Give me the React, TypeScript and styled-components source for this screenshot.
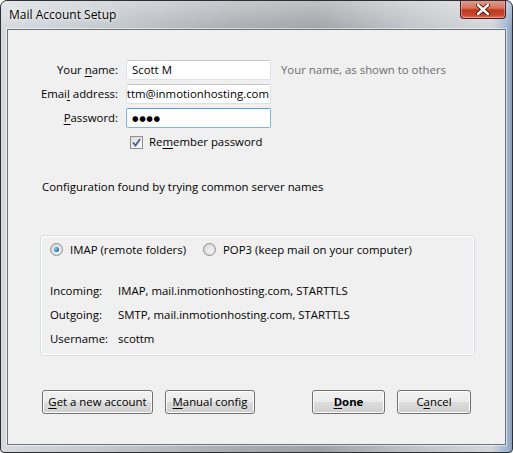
import React from "react";
import styled, { createGlobalStyle } from "styled-components";

const GlobalStyle = createGlobalStyle`
  html, body {
    margin: 0;
    padding: 0;
    background: #ffffff;
  }
  body {
    font-family: "Open Sans", "Noto Sans", "DejaVu Sans", sans-serif;
    font-size: 11.4px;
    line-height: 16px;
    color: #000000;
  }
`;

const Window = styled.div`
  box-sizing: border-box;
  width: 513px;
  height: 453px;
  border: 1px solid #2c2f33;
  border-radius: 7px 7px 4px 4px;
  padding: 0 6px 7px 6px;
  display: flex;
  flex-direction: column;
  overflow: hidden;
  background:
    linear-gradient(to bottom, rgba(255, 255, 255, 0.35), rgba(255, 255, 255, 0) 30px),
    linear-gradient(
      to right,
      #d6dadf 0%,
      #c3c8cd 20%,
      #a9adb2 45%,
      #9ea2a6 62%,
      #bfc3c7 80%,
      #d3d6da 96%,
      #9fb6d4 99%,
      #8ea0b8 100%
    );
`;

const TitleBar = styled.div`
  height: 28px;
  flex: none;
  display: flex;
  align-items: flex-start;
  justify-content: space-between;
`;

const Title = styled.div`
  padding: 6px 0 0 2px;
  font-size: 12px;
  color: #000000;
  text-shadow: 0 0 6px rgba(255, 255, 255, 0.9), 0 0 2px rgba(255, 255, 255, 0.9);
`;

const CloseButton = styled.div`
  box-sizing: border-box;
  width: 46px;
  height: 19px;
  margin-top: -1px;
  border: 1px solid #4d1a14;
  border-top: none;
  border-radius: 0 0 4px 4px;
  display: flex;
  align-items: center;
  justify-content: center;
  box-shadow: inset 0 0 0 1px rgba(255, 200, 190, 0.45);
  background: linear-gradient(
    to bottom,
    #e4a092 0%,
    #d6735f 45%,
    #c0391f 55%,
    #c9472e 85%,
    #e07a5c 100%
  );
`;

const Client = styled.div`
  flex: 1;
  display: flex;
  flex-direction: column;
  background: #f0f0f0;
  border: 1px solid #6d7178;
  box-shadow: 0 0 0 1px rgba(255, 255, 255, 0.55);
  padding-top: 30px;
`;

const Form = styled.div`
  display: grid;
  grid-template-columns: 110px 145px auto;
  grid-auto-rows: 20px;
  column-gap: 8px;
  row-gap: 4px;
  align-items: center;
`;

const Label = styled.div`
  text-align: right;
  white-space: nowrap;
`;

const Key = styled.span`
  text-decoration: underline;
  text-underline-offset: 2px;
`;

const Field = styled.div<{ $focused?: boolean; $end?: boolean }>`
  box-sizing: border-box;
  height: 20px;
  display: flex;
  align-items: center;
  justify-content: ${(p) => (p.$end ? "flex-end" : "flex-start")};
  overflow: hidden;
  white-space: nowrap;
  padding: 0 ${(p) => (p.$end ? "1px" : "5px")};
  background: #ffffff;
  border: 1px solid ${(p) => (p.$focused ? "#7eb4ea" : "#dde1e6")};
  border-top-color: ${(p) => (p.$focused ? "#569de5" : "#c5c9cf")};
  border-radius: 2px;
`;

const Dots = styled.span`
  font-size: 7.5px;
  letter-spacing: 0.6px;
`;

const Hint = styled.div`
  padding-left: 2px;
  color: #6d6d6d;
  white-space: nowrap;
`;

const CheckRow = styled.div`
  grid-column: 2 / 4;
  display: flex;
  align-items: center;
  gap: 6px;
  padding-left: 4px;
`;

const CheckBox = styled.div`
  box-sizing: border-box;
  width: 13px;
  height: 13px;
  border: 1px solid #8f8f8f;
  background: linear-gradient(135deg, #dcdcdc, #fbfbfb);
  display: flex;
  align-items: center;
  justify-content: center;
`;

const Note = styled.div`
  height: 16px;
  margin: 27px 0 0 34px;
`;

const Group = styled.div`
  box-sizing: border-box;
  width: 435px;
  height: 121px;
  margin: 40px 0 0 32px;
  border: 1px solid #d5dfe5;
  border-radius: 3px;
  box-shadow: inset 0 0 0 1px #ffffff;
  padding: 6px 9px 0 9px;
  display: flex;
  flex-direction: column;
`;

const RadioRow = styled.div`
  display: flex;
  align-items: center;
  height: 15px;
`;

const RadioOption = styled.div<{ $width: number }>`
  display: flex;
  align-items: center;
  gap: 7px;
  width: ${(p) => p.$width}px;
`;

const Radio = styled.div<{ $checked?: boolean }>`
  box-sizing: border-box;
  width: 13px;
  height: 13px;
  border-radius: 50%;
  border: 1px solid #8d8d8d;
  background: radial-gradient(circle at 60% 60%, #f4f4f4 0%, #dcdcdc 70%, #cfcfcf 100%);
  display: flex;
  align-items: center;
  justify-content: center;

  &::after {
    content: "";
    display: ${(p) => (p.$checked ? "block" : "none")};
    width: 5px;
    height: 5px;
    border-radius: 50%;
    background: radial-gradient(circle at 35% 35%, #8fd0f7 0%, #2a7fc0 55%, #124d86 100%);
  }
`;

const Details = styled.div`
  margin-top: 22px;
  display: grid;
  grid-template-columns: 68px auto;
  grid-auto-rows: 24px;
  align-items: center;
`;

const Buttons = styled.div`
  margin: 34px 0 0 34px;
  display: flex;
  align-items: center;
`;

const Button = styled.div<{ $width: number; $gap: number; $bold?: boolean }>`
  box-sizing: border-box;
  width: ${(p) => p.$width}px;
  height: 24px;
  margin-right: ${(p) => p.$gap}px;
  border: 1px solid #707070;
  border-radius: 3px;
  display: flex;
  align-items: center;
  justify-content: center;
  font-weight: ${(p) => (p.$bold ? 700 : 400)};
  box-shadow: inset 0 0 0 1px #fcfcfc;
  background: linear-gradient(
    to bottom,
    #f2f2f2 0%,
    #ebebeb 50%,
    #dddddd 50%,
    #cfcfcf 100%
  );
`;

const CloseGlyph = () => (
  <svg width="14" height="11" viewBox="0 0 14 11">
    <path
      d="M2 1 L12 10 M12 1 L2 10"
      stroke="#3b0c06"
      strokeWidth="4.2"
      strokeLinecap="round"
    />
    <path
      d="M2 1 L12 10 M12 1 L2 10"
      stroke="#ffffff"
      strokeWidth="2.4"
      strokeLinecap="round"
    />
  </svg>
);

const CheckMark = () => (
  <svg width="9" height="9" viewBox="0 0 9 9">
    <path d="M1 4.5 L3.5 7.5 L8 1" fill="none" stroke="#4a5f97" strokeWidth="1.8" />
  </svg>
);

const details = [
  ["Incoming:", "IMAP, mail.inmotionhosting.com, STARTTLS"],
  ["Outgoing:", "SMTP, mail.inmotionhosting.com, STARTTLS"],
  ["Username:", "scottm"],
];

const App = () => (
  <>
    <GlobalStyle />
    <Window>
      <TitleBar>
        <Title>Mail Account Setup</Title>
        <CloseButton>
          <CloseGlyph />
        </CloseButton>
      </TitleBar>
      <Client>
        <Form>
          <Label>
            Your <Key>n</Key>ame:
          </Label>
          <Field>Scott M</Field>
          <Hint>Your name, as shown to others</Hint>

          <Label>
            Emai<Key>l</Key> address:
          </Label>
          <Field $end>scottm@inmotionhosting.com</Field>
          <div />

          <Label>
            <Key>P</Key>assword:
          </Label>
          <Field $focused>
            <Dots>●●●●</Dots>
          </Field>
          <div />

          <div />
          <CheckRow>
            <CheckBox>
              <CheckMark />
            </CheckBox>
            <span>
              Re<Key>m</Key>ember password
            </span>
          </CheckRow>
        </Form>

        <Note>Configuration found by trying common server names</Note>

        <Group>
          <RadioRow>
            <RadioOption $width={153}>
              <Radio $checked />
              <span>IMAP (remote folders)</span>
            </RadioOption>
            <RadioOption $width={230}>
              <Radio />
              <span>POP3 (keep mail on your computer)</span>
            </RadioOption>
          </RadioRow>
          <Details>
            {details.map(([k, v]) => (
              <React.Fragment key={k}>
                <span>{k}</span>
                <span>{v}</span>
              </React.Fragment>
            ))}
          </Details>
        </Group>

        <Buttons>
          <Button $width={111} $gap={12}>
            <span>
              <Key>G</Key>et a new account
            </span>
          </Button>
          <Button $width={90} $gap={57}>
            <span>
              <Key>M</Key>anual config
            </span>
          </Button>
          <Button $width={73} $gap={12} $bold>
            <span>
              <Key>D</Key>one
            </span>
          </Button>
          <Button $width={74} $gap={0}>
            <span>
              C<Key>a</Key>ncel
            </span>
          </Button>
        </Buttons>
      </Client>
    </Window>
  </>
);

export default App;
